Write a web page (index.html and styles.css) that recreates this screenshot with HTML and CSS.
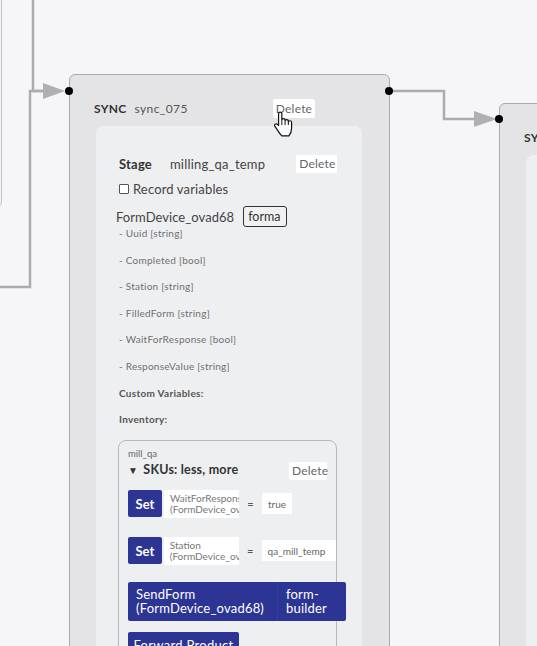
FILE: index.html
```html
<!DOCTYPE html>
<html>
<head>
<meta charset="utf-8">
<link rel="stylesheet" href="styles.css">
</head>
<body>
<div class="canvas">
  <div class="node stub"></div>

  <div class="node sync main-node">
    <div class="node-head">
      <span class="kind">SYNC</span>
      <span class="name">sync_075</span>
      <button class="btn-light head-del">Delete</button>
    </div>
    <div class="panel">
      <div class="stage-row">
        <span class="stage-label">Stage</span>
        <span class="stage-name">milling_qa_temp</span>
        <button class="btn-light stage-del">Delete</button>
      </div>
      <label class="record"><span class="checkbox"></span>Record variables</label>
      <div class="device-row">
        <span class="device-name">FormDevice_ovad68</span>
        <button class="btn-outline">forma</button>
      </div>
      <ul class="vars">
        <li>- Uuid [string]</li>
        <li>- Completed [bool]</li>
        <li>- Station [string]</li>
        <li>- FilledForm [string]</li>
        <li>- WaitForResponse [bool]</li>
        <li>- ResponseValue [string]</li>
        <li class="section">Custom Variables:</li>
        <li class="section">Inventory:</li>
      </ul>
      <div class="inventory">
        <div class="inv-name">mill_qa</div>
        <div class="sku-row">
          <span class="sku-title"><span class="caret">▼</span> SKUs: less, more</span>
          <button class="btn-light sku-del">Delete</button>
        </div>
        <div class="set-row">
          <button class="btn-blue set-btn">Set</button>
          <div class="var-box"><div class="var-clip"><span>WaitForResponse</span><span>(FormDevice_ovad68)</span></div></div>
          <span class="eq">=</span>
          <div class="val-box short">true</div>
        </div>
        <div class="set-row">
          <button class="btn-blue set-btn">Set</button>
          <div class="var-box"><div class="var-clip"><span>Station</span><span>(FormDevice_ovad68)</span></div></div>
          <span class="eq">=</span>
          <div class="val-box long">qa_mill_temp</div>
        </div>
        <div class="send-btn">
          <span class="send-left">SendForm<br>(FormDevice_ovad68)</span>
          <span class="send-right">form-<br>builder</span>
        </div>
        <button class="btn-blue fwd-btn">Forward Product</button>
      </div>
    </div>
  </div>

  <div class="node sync second-node">
    <div class="node-head">
      <span class="kind">SYNC</span>
    </div>
    <div class="panel"></div>
  </div>

  <svg class="edges" width="537" height="646" viewBox="0 0 537 646">
    <path d="M33 0 V91 H50" class="edge"/>
    <path d="M0 287 H30 V91 H50" class="edge"/>
    <polygon points="43,83 65,91 43,99" class="arrow"/>
    <circle cx="69" cy="91" r="4" class="dot"/>
    <path d="M389 91 H444 V119 H478" class="edge"/>
    <polygon points="474,111 497,119 474,127" class="arrow"/>
    <circle cx="389" cy="91" r="4" class="dot"/>
    <circle cx="499" cy="119" r="4" class="dot"/>
  </svg>

  <svg class="cursor" width="22" height="26" viewBox="0 0 20 24">
    <path d="M5 12 V2.5 Q5 1 6.5 1 Q8 1 8 2.5 V8.5 Q8 7 9.5 7 Q11 7 11 8.5 V9.5 Q11 8 12.5 8 Q14 8 14 9.5 V10.5 Q14 9 15.5 9 Q17 9 17 10.5 V16 Q17 20 14.5 23 H8 Q6 21 3.5 17 L1.5 14 Q0.8 12.5 2.2 12 Q3.5 11.5 5 13.5 Z" fill="#fff" stroke="#111" stroke-width="1.1" stroke-linejoin="round"/>
    <path d="M8 9 V13 M11 10 V13 M14 11 V13" stroke="#111" stroke-width="0.9" fill="none"/>
  </svg>
</div>
</body>
</html>
```

FILE: styles.css
```css
* { box-sizing: border-box; }
html, body { margin: 0; padding: 0; }
body {
  background: #f6f6f8;
  font-family: "Lato", "Noto Sans", sans-serif;
  color: #333;
  overflow: hidden;
}
button { font-family: inherit; cursor: pointer; }

.canvas {
  position: relative;
  width: 537px;
  height: 646px;
  overflow: hidden;
}

.node {
  position: absolute;
  background: #e4e4e6;
  border: 1px solid #ababad;
  border-radius: 6px;
}
.stub {
  left: -120px;
  top: -20px;
  width: 122px;
  height: 228px;
  background: #f3f3f5;
  border-color: #c4c4c6;
}
.main-node {
  left: 69px;
  top: 74px;
  width: 321px;
  height: 640px;
}
.second-node {
  left: 499px;
  top: 103px;
  width: 200px;
  height: 600px;
}

.node-head {
  display: flex;
  align-items: center;
  height: 21px;
  margin-top: 23px;
  padding-left: 24px;
  font-size: 12px;
}
.kind { font-weight: 700; color: #333; letter-spacing: 0.3px; }
.name { margin-left: 8px; color: #555; letter-spacing: 0.4px; }

.btn-light {
  background: #fff;
  border: none;
  border-radius: 2px;
  height: 19px;
  padding: 0 3px;
  font-size: 12px;
  color: #666;
  letter-spacing: 0.2px;
}
.head-del { margin-left: 85px; }

.panel {
  margin: 7px 0 0 26px;
  width: 266px;
  height: 600px;
  background: #eeeff1;
  border-radius: 8px;
  padding: 28px 0 0 23px;
}

.stage-row {
  display: flex;
  align-items: center;
  height: 19px;
  font-size: 13px;
  letter-spacing: 0.2px;
}
.stage-label { font-weight: 700; color: #333; }
.stage-name { margin-left: 18px; color: #444; }
.stage-del { margin-left: 31px; height: 18px; width: 41px; }

.record {
  display: flex;
  align-items: center;
  height: 18px;
  margin-top: 7px;
  font-size: 13px;
  letter-spacing: 0.15px;
  color: #444;
}
.checkbox {
  width: 10px;
  height: 10px;
  border: 1px solid #555;
  border-radius: 1px;
  background: #fff;
  margin-right: 4px;
}

.device-row {
  display: flex;
  align-items: center;
  height: 21px;
  margin-top: 8px;
  margin-left: -3px;
  font-size: 13px;
  letter-spacing: 0.05px;
  color: #444;
}
.btn-outline {
  margin-left: 9px;
  height: 21px;
  width: 44px;
  padding: 0 4px;
  background: #f1f1f1;
  border: 1px solid #333;
  border-radius: 3px;
  font-size: 12.5px;
  color: #333;
  text-align: left;
  overflow: hidden;
}

.vars {
  list-style: none;
  margin: -7px 0 0 0;
  padding: 0;
  font-size: 10px;
  letter-spacing: 0.25px;
  color: #707070;
}
.vars li { line-height: 26.6px; height: 26.6px; }
.vars .section { font-weight: 700; color: #555; letter-spacing: 0.3px; }

.inventory {
  margin: 7px 0 0 -1px;
  width: 219px;
  height: 260px;
  border: 1px solid #b9b9bb;
  border-radius: 8px;
  padding: 6px 0 0 9px;
}
.inv-name { font-size: 9.5px; line-height: 13px; color: #666; }
.sku-row {
  display: flex;
  align-items: center;
  justify-content: space-between;
  height: 19px;
  padding-right: 9px;
}
.sku-title { font-size: 12.5px; font-weight: 700; color: #333; letter-spacing: 0.2px; }
.caret { font-size: 10px; margin-right: 2px; }
.sku-del { height: 18px; margin-top: 3px; width: 38px; }

.btn-blue {
  background: #2c3594;
  color: #fff;
  border: none;
  border-radius: 2px;
  font-size: 13px;
}
.set-row {
  display: flex;
  align-items: center;
  height: 28px;
  margin-top: 11px;
}
.set-row + .set-row { margin-top: 19px; }
.set-btn {
  width: 34px;
  height: 27px;
  padding: 0;
  font-weight: 700;
}
.var-box {
  width: 75px;
  height: 28px;
  margin-left: 2px;
  padding-left: 6px;
  background: #fff;
  display: flex;
  align-items: center;
}
.var-clip {
  display: flex;
  flex-direction: column;
  width: 69px;
  overflow: hidden;
  font-size: 10px;
  line-height: 11px;
  color: #777;
  white-space: nowrap;
}
.eq {
  width: 23px;
  text-align: center;
  font-size: 11px;
  color: #555;
}
.val-box {
  height: 21px;
  background: #fff;
  font-size: 10px;
  color: #666;
  display: flex;
  align-items: center;
  padding-left: 6px;
  white-space: nowrap;
  overflow: hidden;
}
.val-box.short { width: 30px; }
.val-box.long { width: 75px; }

.send-btn {
  display: flex;
  width: 218px;
  height: 39px;
  margin-top: 17px;
  background: #2c3594;
  border-radius: 2px;
  color: #fff;
  font-size: 13px;
  letter-spacing: 0.2px;
  line-height: 14px;
}
.send-left {
  width: 150px;
  padding: 5px 0 0 8px;
  border-right: 1px solid #34409e;
}
.send-right { padding: 5px 0 0 8px; }

.fwd-btn {
  display: block;
  margin-top: 11px;
  width: 111px;
  height: 24px;
  padding: 3px 0 0 0;
  text-align: center;
  line-height: 14px;
  letter-spacing: 0.3px;
}

.edges {
  position: absolute;
  left: 0;
  top: 0;
  pointer-events: none;
}
.edge { fill: none; stroke: #acacae; stroke-width: 2.5; }
.arrow { fill: #b0b0b2; }
.dot { fill: #000; }

.cursor {
  position: absolute;
  left: 273px;
  top: 111px;
}
```
